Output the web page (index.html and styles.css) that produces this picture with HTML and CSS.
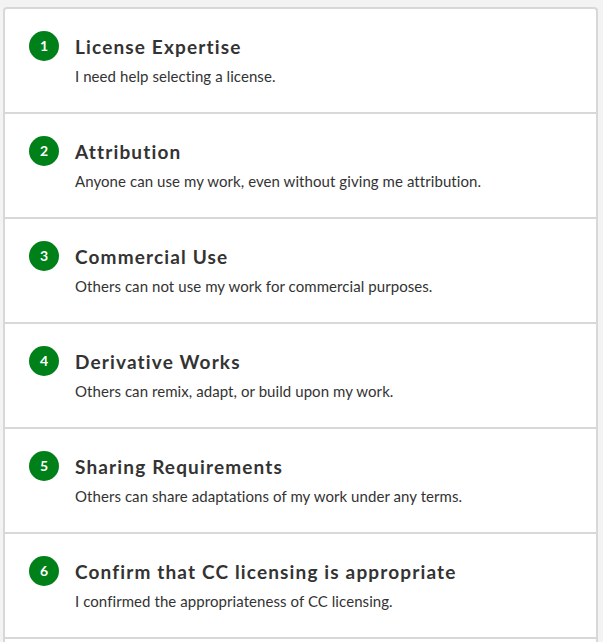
FILE: index.html
```html
<!DOCTYPE html>
<html lang="en">
<head>
<meta charset="utf-8">
<title>License steps</title>
<link rel="stylesheet" href="styles.css">
</head>
<body>
<div class="card">
  <div class="step">
    <div class="num">1</div>
    <div class="text">
      <div class="title">License Expertise</div>
      <div class="desc">I need help selecting a license.</div>
    </div>
  </div>
  <div class="step">
    <div class="num">2</div>
    <div class="text">
      <div class="title">Attribution</div>
      <div class="desc">Anyone can use my work, even without giving me attribution.</div>
    </div>
  </div>
  <div class="step">
    <div class="num">3</div>
    <div class="text">
      <div class="title">Commercial Use</div>
      <div class="desc">Others can not use my work for commercial purposes.</div>
    </div>
  </div>
  <div class="step">
    <div class="num">4</div>
    <div class="text">
      <div class="title">Derivative Works</div>
      <div class="desc">Others can remix, adapt, or build upon my work.</div>
    </div>
  </div>
  <div class="step">
    <div class="num">5</div>
    <div class="text">
      <div class="title">Sharing Requirements</div>
      <div class="desc">Others can share adaptations of my work under any terms.</div>
    </div>
  </div>
  <div class="step">
    <div class="num">6</div>
    <div class="text">
      <div class="title">Confirm that CC licensing is appropriate</div>
      <div class="desc">I confirmed the appropriateness of CC licensing.</div>
    </div>
  </div>
  <div class="card-rest"></div>
</div>
</body>
</html>
```

FILE: styles.css
```css
html, body {
  margin: 0;
  padding: 0;
  background: #f3f3f3;
  overflow: hidden;
}
body {
  padding: 7px 5px 0 3px;
  font-family: Lato, "Open Sans", sans-serif;
  color: #333333;
}
.card {
  background: #ffffff;
  border: 2px solid #d8d8d8;
  border-bottom: none;
  border-radius: 4px 4px 0 0;
}
.step {
  display: flex;
  align-items: flex-start;
  gap: 16px;
  height: 103px;
  box-sizing: content-box;
  padding: 0 24px;
  border-bottom: 2px solid #d8d8d8;
}
.num {
  flex: none;
  width: 30px;
  height: 30px;
  margin-top: 22px;
  border-radius: 50%;
  background: #008019;
  color: #ffffff;
  font-weight: 700;
  font-size: 14px;
  line-height: 30px;
  text-align: center;
}
.text {
  margin-top: 22px;
}
.title {
  font-size: 19px;
  font-weight: 700;
  line-height: 32px;
  letter-spacing: 1.15px;
}
.desc {
  font-size: 15px;
  line-height: 22px;
  margin-top: 2px;
  letter-spacing: 0.07px;
}
.card-rest {
  height: 20px;
}
```
